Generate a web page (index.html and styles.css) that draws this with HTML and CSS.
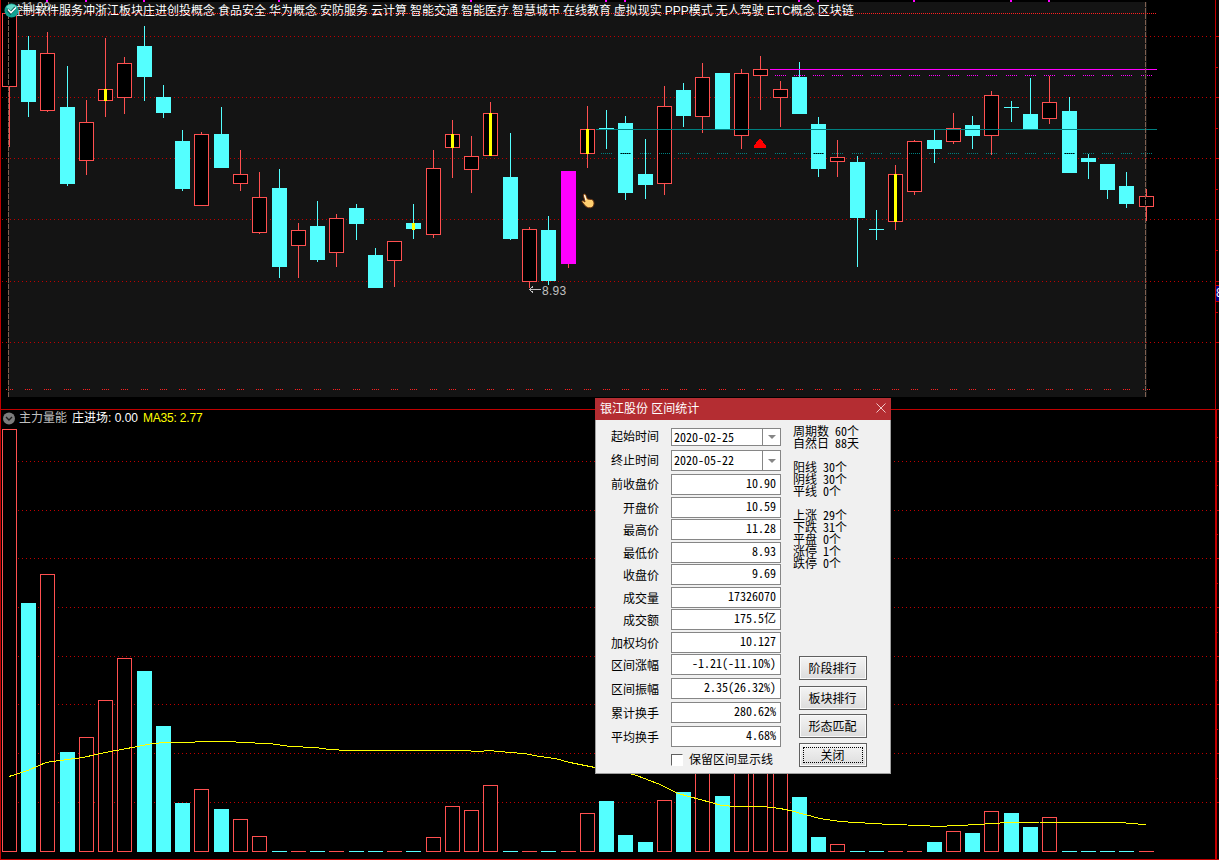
FILE: index.html
```html
<!DOCTYPE html>
<html lang="zh-CN">
<head>
    <meta charset="UTF-8">
    <title>银江股份 区间统计</title>
    <link rel="stylesheet" href="styles.css">
</head>
<body>

<div class="terminal">
    <!-- K线图 -->
    <div class="price-panel">
        <div class="high-label">←11.28</div>
        <div class="concepts">控制软件服务冲浙江板块庄进创投概念 食品安全 华为概念 安防服务 云计算 智能交通 智能医疗 智慧城市 在线教育 虚拟现实 PPP模式 无人驾驶 ETC概念 区块链</div>
        <svg id="price-chart" width="1219" height="409" viewBox="0 0 1219 409"></svg>
        <svg class="badge" width="15" height="15" viewBox="0 0 15 15">
            <circle cx="7.5" cy="7.5" r="7" fill="#12a594"/>
            <path d="M2 4a7 7 0 0 1 11 0L7 8z" fill="#63d8c8"/>
            <path d="M3.500 6.500l3 3.500 5-5.500" fill="none" stroke="#0a5f5a" stroke-width="3"/>
            <path d="M4 6.500l3 3 5-5" fill="none" stroke="#fff" stroke-width="1.600"/>
        </svg>
        <div class="low-label">8.93</div>
        <div class="axis-mark">8</div>
        <svg class="cursor" width="14" height="16" viewBox="0 0 14 16">
            <path d="M3.5 1c1 0 1.300 1 1.700 2L6.500 6l4 .5c2 .5 2.500 2 2.500 4s-1 4-3.500 4.300C6.500 15 5 14 3.500 12L1 9c-.5-1 .5-1.500 1.500-1L4 9 2.500 3c-.3-1 0-2 1-2z" fill="#ffcf70" stroke="#6b3410" stroke-width="1"/>
            <path d="M3.500 2l1.500 5" stroke="#fff" stroke-width="1"/>
        </svg>
    </div>

    <!-- 量能副图 -->
    <div class="volume-panel">
        <svg id="volume-chart" width="1219" height="451" viewBox="0 409 1219 451"></svg>
        <div class="volume-header">
            <svg width="13" height="13" viewBox="0 0 13 13">
                <circle cx="6" cy="6.500" r="6" fill="#7c7c7c"/>
                <path d="M3 5l3 3 3-3" fill="none" stroke="#1c1c1c" stroke-width="1.400"/>
            </svg>
            <span class="name">主力量能</span>
            <span class="enter">庄进场: 0.00</span>
            <span class="ma">MA35: 2.77</span>
        </div>
    </div>
</div>

<!-- 区间统计窗口 -->
<div class="dialog">
    <div class="dialog-title">
        <span>银江股份 区间统计</span>
        <svg width="11" height="11" viewBox="0 0 11 11"><path d="M.5 .5l9 9M9.500 .5l-9 9" stroke="#f0c8c8" stroke-width="1"/></svg>
    </div>
    <div class="dialog-body">
        <div class="form">
            <label>起始时间</label><div class="field date">2020-02-25<i></i></div>
            <label>终止时间</label><div class="field date">2020-05-22<i></i></div>
            <label>前收盘价</label><div class="field">10.90</div>
            <label>开盘价</label><div class="field">10.59</div>
            <label>最高价</label><div class="field">11.28</div>
            <label>最低价</label><div class="field">8.93</div>
            <label>收盘价</label><div class="field">9.69</div>
            <label>成交量</label><div class="field">17326070</div>
            <label>成交额</label><div class="field">175.5亿</div>
            <label>加权均价</label><div class="field">10.127</div>
            <label>区间涨幅</label><div class="field">-1.21(-11.10%)</div>
            <label>区间振幅</label><div class="field">2.35(26.32%)</div>
            <label>累计换手</label><div class="field">280.62%</div>
            <label>平均换手</label><div class="field">4.68%</div>
            <div class="keep"><span class="box"></span>保留区间显示线</div>
        </div>
        <div class="side">
            <pre class="stats">周期数 60个
自然日 88天

阳线 30个
阴线 30个
平线 0个

上涨 29个
下跌 31个
平盘 0个
涨停 1个
跌停 0个</pre>
            <div class="buttons">
                <button>阶段排行</button>
                <button>板块排行</button>
                <button>形态匹配</button>
                <button class="focus">关闭</button>
            </div>
        </div>
    </div>
</div>

<script src="chart.js"></script>
</body>
</html>
```
FILE: styles.css
```css
body {
    margin: 0;
    background: #000;
    overflow: hidden;
    font: 12px/14px "Liberation Sans", "Noto Sans CJK SC", sans-serif;
}
svg {
    display: block;
}
.terminal {
    width: 1219px;
    height: 860px;
    display: flex;
    flex-direction: column;
}
.price-panel {
    position: relative;
    height: 409px;
    background: linear-gradient(#141414, #141414) 8px 2px / 1139px 395px no-repeat;
}
.volume-panel {
    position: relative;
    height: 451px;
}
#price-chart, #volume-chart {
    position: relative;
    shape-rendering: crispEdges;
}

/* 图上文字 */
.concepts {
    position: absolute;
    left: 11px;
    top: 4px;
    color: #fff;
    white-space: nowrap;
    word-spacing: -0.35px;
}
.high-label, .low-label {
    position: absolute;
    color: #c0c0c0;
}
.high-label {
    left: 9px;
    top: 0;
}
.low-label {
    left: 542px;
    top: 284px;
    letter-spacing: 0.3px;
}
.badge {
    position: absolute;
    left: 4px;
    top: 3px;
}
.axis-mark {
    position: absolute;
    left: 1216px;
    top: 286px;
    width: 3px;
    height: 15px;
    overflow: hidden;
    background: #000080;
    color: #fff;
}
.cursor {
    position: absolute;
    left: 581px;
    top: 193px;
}
.volume-header {
    position: absolute;
    left: 3px;
    top: 2px;
    height: 14px;
    display: flex;
    align-items: center;
    white-space: nowrap;
}
.volume-header .name {
    width: 53px;
    margin-left: 3px;
    color: #c0c0c0;
}
.volume-header .enter {
    width: 71px;
    color: #fff;
}
.volume-header .ma {
    color: #ff0;
    letter-spacing: -0.2px;
}

/* 窗口 */
.dialog {
    position: absolute;
    left: 595px;
    top: 398px;
    width: 296px;
    height: 376px;
    background: #f0f0f0;
    color: #000;
    display: flex;
    flex-direction: column;
}
.dialog-title {
    height: 22px;
    box-sizing: border-box;
    padding: 0 4px 0 5px;
    background: #b42d32;
    color: #fff;
    display: flex;
    align-items: center;
    justify-content: space-between;
}
.dialog-title svg {
    margin-bottom: 2px;
}
.dialog-body {
    flex: 1;
    display: flex;
    border: 1px solid #a0a0a0;
    border-top: 0;
}
.form {
    width: 185px;
    padding-top: 8px;
    display: grid;
    grid-template-columns: 63px 110px;
    grid-template-rows: 22px 24px 23px 22px 23px 22px 23px 22px 23px 22px 24px 24px 24px 27px 14px;
    column-gap: 12px;
    align-items: start;
}
.form label {
    text-align: right;
    line-height: 24px;
}
.form label:nth-of-type(1) {
    line-height: 18px;
}
.form label:nth-of-type(2), .form label:nth-of-type(3) {
    line-height: 22px;
}
.field {
    position: relative;
    box-sizing: border-box;
    height: 21px;
    padding-right: 4px;
    border: 1px solid #868686;
    background: #fff;
    text-align: right;
    line-height: 15px;
    font-family: "Noto Sans CJK SC", sans-serif;
    font-feature-settings: "hwid";
}
.field.date {
    text-align: left;
    padding-left: 2px;
    line-height: 17px;
}
.field.date:nth-of-type(1) {
    height: 18px;
    line-height: 16px;
}
.field.date i {
    position: absolute;
    right: 0;
    top: 0;
    bottom: 0;
    width: 17px;
    border-left: 1px solid #868686;
}
.field.date i::after {
    content: "";
    position: absolute;
    left: 5px;
    top: 6px;
    border: 4px solid transparent;
    border-top-color: #868686;
    border-bottom: 0;
}
.field.date:nth-of-type(2) i::after {
    top: 8px;
}
.keep {
    grid-column: 2;
    display: flex;
    align-items: center;
    gap: 6px;
    line-height: 14px;
    white-space: nowrap;
}
.keep .box {
    width: 12px;
    height: 12px;
    box-sizing: border-box;
    flex: none;
    background: #fff;
    border: 1px solid #fff;
    border-left-color: #606060;
    border-top-color: #606060;
}
.side {
    flex: 1;
    padding: 5px 0 0 12px;
}
.stats {
    margin: 0;
    height: 231px;
    font: 12px/12px "Noto Sans CJK SC", sans-serif;
    font-feature-settings: "hwid";
}
.buttons {
    padding-left: 6px;
}
.buttons button {
    display: block;
    width: 68px;
    height: 24px;
    margin: 0 0 6px;
    padding: 2px 1px 0 0;
    border: 1px solid #606060;
    background: linear-gradient(#f4f4f4, #dcdcdc);
    box-shadow: inset 0 0 0 1px #fafafa;
    font: inherit;
    color: #000;
}
.buttons button:nth-child(2) {
    margin-bottom: 4px;
}
.buttons button:nth-child(3) {
    margin-bottom: 5px;
}
.buttons .focus {
    outline: 1px dotted #000;
    outline-offset: -5px;
}
```
FILE: chart.js
```js
const RED = '#ff5050';
const CYAN = '#54ffff';
const GRID = '#c00000';

// [x, high, bodyTop, bodyBottom, low, type, volumeTop]
// type: r = up, c = down, m = signal, + y = yellow mark
const candles = [
    [2, 13, 13, 87, 147, 'r', 429], [21, 36, 50, 102, 117, 'c', 603], [40, 32, 53, 111, 112, 'r', 574],
    [60, 66, 107, 184, 186, 'c', 752], [79, 100, 122, 161, 175, 'r', 737], [98, 38, 89, 101, 117, 'ry', 700],
    [117, 57, 63, 98, 114, 'r', 658], [137, 26, 46, 77, 101, 'c', 671], [156, 85, 97, 113, 118, 'c', 726],
    [175, 130, 141, 189, 191, 'c', 803], [194, 132, 134, 206, 206, 'r', 789], [214, 107, 134, 168, 168, 'c', 809],
    [233, 150, 174, 184, 191, 'r', 819], [252, 172, 197, 233, 234, 'r', 836], [272, 169, 188, 267, 278, 'c', 851],
    [291, 223, 230, 246, 278, 'r', 851], [310, 201, 226, 260, 262, 'c', 851], [329, 214, 218, 253, 267, 'r', 851],
    [349, 204, 208, 224, 240, 'c', 851], [368, 248, 255, 288, 288, 'c', 851], [387, 241, 241, 261, 287, 'r', 851],
    [406, 204, 223, 229, 239, 'cy', 851], [426, 150, 168, 235, 238, 'r', 837], [445, 120, 134, 148, 178, 'ry', 806],
    [464, 136, 156, 170, 193, 'r', 810], [483, 102, 113, 156, 156, 'ry', 785], [503, 133, 177, 239, 240, 'c', 851],
    [522, 227, 229, 282, 288, 'r', 851], [541, 216, 230, 281, 285, 'c', 851], [561, 171, 171, 264, 268, 'm', 851],
    [580, 106, 129, 154, 168, 'ry', 813], [599, 110, 128, 129, 149, 'c', 801], [618, 116, 123, 193, 200, 'c', 835],
    [638, 139, 174, 185, 199, 'c', 842], [657, 86, 106, 184, 195, 'r', 800], [676, 83, 90, 116, 127, 'c', 792],
    [695, 63, 77, 117, 133, 'r', 740], [715, 73, 73, 129, 129, 'c', 796], [734, 69, 73, 136, 149, 'r', 740],
    [753, 56, 69, 76, 110, 'r', 740], [773, 81, 89, 98, 127, 'r', 740], [792, 62, 77, 114, 114, 'c', 797],
    [811, 117, 124, 169, 177, 'c', 837], [830, 140, 157, 162, 177, 'r', 844], [850, 156, 162, 218, 267, 'c', 851],
    [869, 210, 229, 230, 240, 'c', 851], [888, 165, 174, 222, 230, 'ry', 851], [907, 140, 141, 192, 195, 'r', 851],
    [927, 130, 140, 149, 163, 'c', 842], [946, 113, 128, 142, 144, 'r', 831], [965, 116, 125, 136, 149, 'c', 833],
    [984, 91, 95, 136, 155, 'r', 811], [1004, 101, 107, 108, 122, 'c', 813], [1023, 78, 114, 129, 129, 'c', 827],
    [1042, 76, 102, 119, 124, 'r', 817], [1062, 97, 111, 173, 173, 'c', 851], [1081, 154, 158, 162, 179, 'c', 851],
    [1100, 164, 164, 190, 199, 'c', 851], [1119, 172, 186, 204, 208, 'c', 851], [1139, 189, 196, 207, 221, 'r', 851]
];

const ma35 = '9,776 28,770 46,762 60,760 83,757 105,752 127,748 150,743.500 163,742 190,742 200,741 231,741 240,742 ' +
    '270,743 290,746 315,747 330,749 347,750 462,750 480,751 488,750 510,752 524,753 540,756 555,758 570,762 ' +
    '585,765 595,767 634,774 660,784 678,793 700,799 722,805 735,806 763,806 780,808 790,810 820,818 840,821 ' +
    '873,823 890,824 924,825 935,826 960,825 985,823.500 1000,822.500 1020,822 1040,821.500 1117,821.500 1130,823 1146,824';

function rect(x, y, w, h, fill) {
    return `<rect x="${x}" y="${y}" width="${w}" height="${h}" fill="${fill}"/>`;
}

function box(x, top, bottom, fill) {
    return `<rect x="${x + 0.5}" y="${top + 0.5}" width="14" height="${bottom - top - 1}" fill="${fill}" stroke="${RED}"/>`;
}

function dots(x1, x2, y, step, color) {
    return `<path d="M${x1} ${y + 0.5}H${x2}" stroke="${color}" stroke-dasharray="1 ${step - 1}"/>`;
}

function drawPrice() {
    let s = '';
    [36, 97, 158, 219, 281, 342].forEach(y => {
        s += dots(2, 1212, y, 4, GRID) + rect(1216, y, 3, 1, GRID);
    });
    [67, 128, 189, 250, 312].forEach(y => s += rect(1216, y, 2, 1, GRID));
    [46, 85, 143, 278, 470, 605, 624, 798, 817, 913, 1010, 1048].forEach(x => s += rect(x, 0, 2, 2, '#ff00ff'));

    candles.forEach(([x, high, top, bottom, low, type]) => {
        const color = type[0] === 'c' ? CYAN : RED;
        s += rect(x + 7, high, 1, low - high, color);
        // 第一根从概念文字下方开始填充
        if (type[0] === 'r') s += x === 2 ? rect(x, 17, 15, 69, '#000') + box(x, top, bottom, 'none') : box(x, top, bottom, '#000');
        else s += rect(x, top, 15, bottom - top, type === 'm' ? '#ff00ff' : CYAN);
        if (type[1] === 'y') s += rect(x + 6, top, 3, Math.max(bottom - top, 7), '#ffff00');
    });
    s += rect(9, 87, 1, 60, RED);

    // 支撑压力线
    s += rect(770, 69, 387, 1, '#ff00ff') + rect(596, 129, 561, 1, '#008080');
    s += dots(3, 1157, 13, 2, '#ff2020');
    candles.forEach(([x, high, top, bottom, low, type], i) => {
        s += dots(x + 4, x + 11, 389, 2, '#ff2020');
        if (i > 39) s += dots(x + 2, x + 13, 75, 2, '#ff00ff');
        if (i > 30) {
            if (type === 'c' && top < 153 && bottom > 154) s += rect(x + 2, 153, 11, 1, '#000');
            s += dots(x + 2, x + 13, 153, 2, '#008080');
        }
    });

    s += '<path d="M8.500 2V397M1145.500 2V397" stroke="#806050" stroke-dasharray="5 1"/>';
    s += '<path d="M754 148v-2l5-7h2l5 7v2z" fill="#ff0000"/>';
    s += '<path d="M529.500 289.500H541M533 286.500l-3.500 3 3.500 3" fill="none" stroke="#c0c0c0"/>';
    s += rect(0, 0, 1, 409, GRID) + rect(1215, 0, 1, 409, GRID);
    s += rect(1215, 285, 4, 1, GRID) + rect(1215, 301, 4, 1, GRID);
    document.getElementById('price-chart').innerHTML = s;
}

function drawVolume() {
    let s = '';
    [461, 510, 558, 607, 656, 704, 753, 802].forEach(y => {
        s += dots(18, 1212, y, 4, GRID) + rect(1217, y, 2, 1, GRID);
    });
    [437, 485, 534, 583, 632, 680, 729, 778].forEach(y => s += rect(1217, y, 1, 1, GRID));

    candles.forEach(([x, , , , , type, top]) => {
        if (type[0] === 'c') s += rect(x, top, 15, 852 - top, CYAN);
        else if (top === 851) s += rect(x, 851, 15, 1, RED);
        else s += box(x, top, 852, '#000');
    });
    s += `<polyline points="${ma35}" transform="translate(0 .5)" fill="none" stroke="#ffff00"/>`;
    s += rect(0, 409, 1, 451, GRID) + rect(1215, 410, 2, 450, GRID);
    s += rect(0, 409, 1219, 1, GRID) + rect(0, 859, 1219, 1, GRID);
    document.getElementById('volume-chart').innerHTML = s;
}

drawPrice();
drawVolume();
```
